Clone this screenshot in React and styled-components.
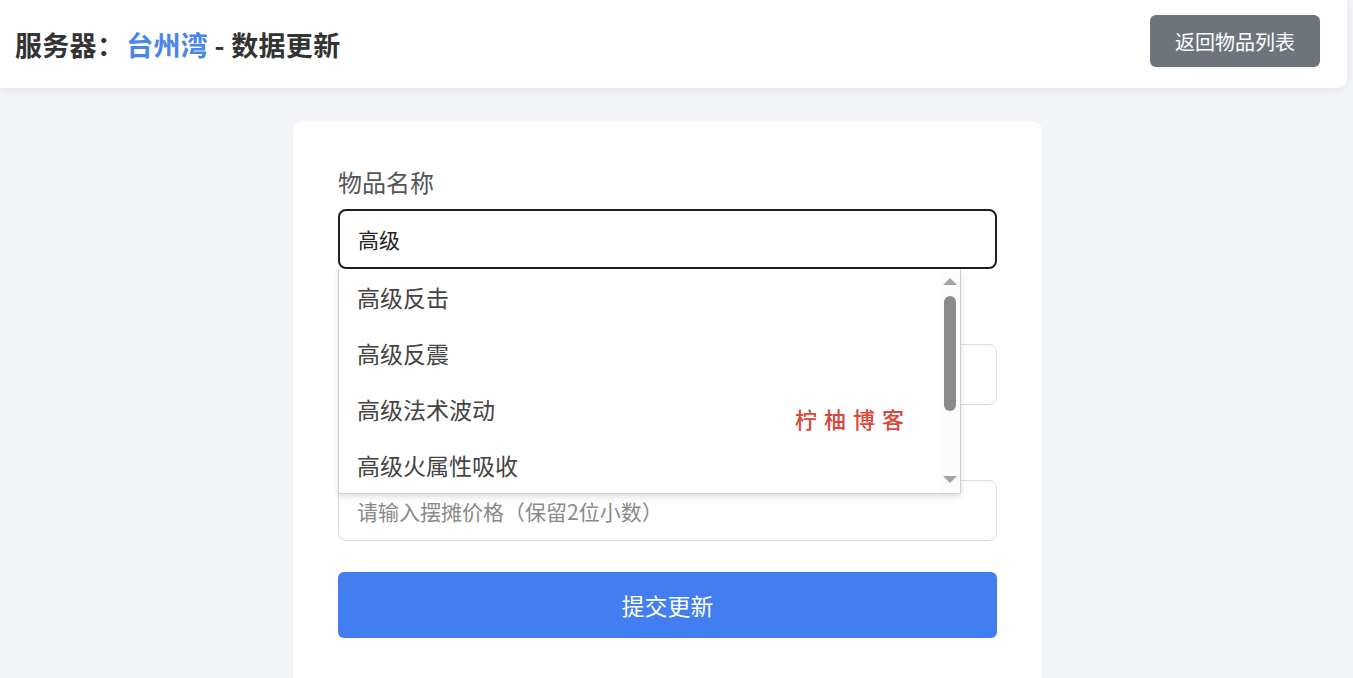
import React, { useState } from 'react';
import styled, { createGlobalStyle } from 'styled-components';

const GlobalStyle = createGlobalStyle`
  html, body {
    margin: 0;
    padding: 0;
    background: #f3f4f7;
    font-family: "Noto Sans CJK SC", "Noto Sans", "Liberation Sans", sans-serif;
    overflow: hidden;
  }
  * { box-sizing: border-box; }
`;

const Header = styled.header`
  height: 88px;
  margin-right: 6px;
  padding: 0 27px 0 15px;
  background: #fff;
  border-radius: 0 0 10px 0;
  box-shadow: 0 2px 8px rgba(0, 0, 0, 0.06);
  display: flex;
  align-items: center;
  justify-content: space-between;
`;

const Title = styled.h1`
  margin: 0;
  font-size: 27px;
  font-weight: 700;
  color: #333;
  letter-spacing: 0.3px;
`;

const ServerName = styled.span`
  color: #4a86e8;
  margin-left: 2px;
`;

const BackButton = styled.button`
  width: 170px;
  height: 52px;
  margin-bottom: 6px;
  border: none;
  border-radius: 6px;
  background: #6c757d;
  color: #fff;
  font-family: inherit;
  font-size: 20px;
  cursor: pointer;
`;

const Main = styled.main`
  padding: 33px 18px 0 0;
`;

const Card = styled.section`
  position: relative;
  width: 749px;
  min-height: 620px;
  margin: 0 auto;
  padding: 46px 45px;
  background: #fff;
  border-radius: 10px;
  display: flex;
  flex-direction: column;
  gap: 33px;
`;

const Field = styled.div`
  position: relative;
  display: flex;
  flex-direction: column;
  gap: 12px;
`;

const Label = styled.label`
  font-size: 24px;
  line-height: 30px;
  color: #555;
`;

const Input = styled.input`
  width: 100%;
  height: ${(p) => (p.$tall ? '61px' : '60px')};
  padding: 0 18px;
  border: ${(p) => (p.$focused ? '2px solid #1f1f1f' : '1px solid #dcdcdc')};
  border-radius: 8px;
  font-family: inherit;
  font-size: 21px;
  color: #222;
  outline: none;
  caret-color: #222;
  &::placeholder {
    color: #8a8a8a;
  }
`;

const Suggestions = styled.div`
  position: absolute;
  top: 100%;
  left: 0;
  width: 623px;
  height: 225px;
  background: #fff;
  border: 1px solid #cfcfcf;
  border-top: none;
  box-shadow: 0 3px 6px rgba(0, 0, 0, 0.12);
  display: flex;
  z-index: 5;
`;

const OptionList = styled.ul`
  flex: 1;
  margin: 0;
  padding: 0;
  list-style: none;
`;

const Option = styled.li`
  height: 56px;
  padding-left: 18px;
  display: flex;
  align-items: center;
  font-size: 23px;
  color: #444;
`;

const ScrollTrack = styled.div`
  width: 20px;
  background: #fcfcfc;
  display: flex;
  flex-direction: column;
  align-items: center;
  padding: 9px 0 10px;
`;

const Arrow = styled.div`
  width: 0;
  height: 0;
  border-left: 7px solid transparent;
  border-right: 7px solid transparent;
  ${(p) =>
    p.$down ? 'border-top: 7px solid #a3a3a3;' : 'border-bottom: 7px solid #a3a3a3;'}
`;

const Thumb = styled.div`
  width: 12px;
  height: 115px;
  margin-top: 11px;
  border-radius: 6px;
  background: #8b8b8b;
`;

const Spacer = styled.div`
  flex: 1;
`;

const SubmitButton = styled.button`
  height: 66px;
  margin-top: -2px;
  border: none;
  border-radius: 6px;
  background: #437ef0;
  color: #fff;
  font-family: inherit;
  font-size: 23px;
  cursor: pointer;
`;

const Watermark = styled.div`
  position: absolute;
  left: 502px;
  top: 281px;
  font-size: 22px;
  font-weight: 500;
  letter-spacing: 7px;
  color: #d9463b;
  z-index: 6;
  pointer-events: none;
`;

const suggestions = ['高级反击', '高级反震', '高级法术波动', '高级火属性吸收'];

export default function App() {
  const [name, setName] = useState('高级');

  return (
    <>
      <GlobalStyle />
      <Header>
        <Title>
          服务器：<ServerName>台州湾</ServerName> - 数据更新
        </Title>
        <BackButton>返回物品列表</BackButton>
      </Header>
      <Main>
        <Card>
          <Field>
            <Label htmlFor="itemName">物品名称</Label>
            <Input
              id="itemName"
              $focused
              value={name}
              onChange={(e) => setName(e.target.value)}
              autoFocus
            />
            <Suggestions>
              <OptionList>
                {suggestions.map((s) => (
                  <Option key={s}>{s}</Option>
                ))}
              </OptionList>
              <ScrollTrack>
                <Arrow />
                <Thumb />
                <Spacer />
                <Arrow $down />
              </ScrollTrack>
            </Suggestions>
          </Field>
          <Field>
            <Label htmlFor="stock">库存数量</Label>
            <Input id="stock" $tall placeholder="请输入库存数量" />
          </Field>
          <Field>
            <Label htmlFor="price">摆摊价格</Label>
            <Input id="price" $tall placeholder="请输入摆摊价格（保留2位小数）" />
          </Field>
          <SubmitButton>提交更新</SubmitButton>
          <Watermark>柠柚博客</Watermark>
        </Card>
      </Main>
    </>
  );
}
